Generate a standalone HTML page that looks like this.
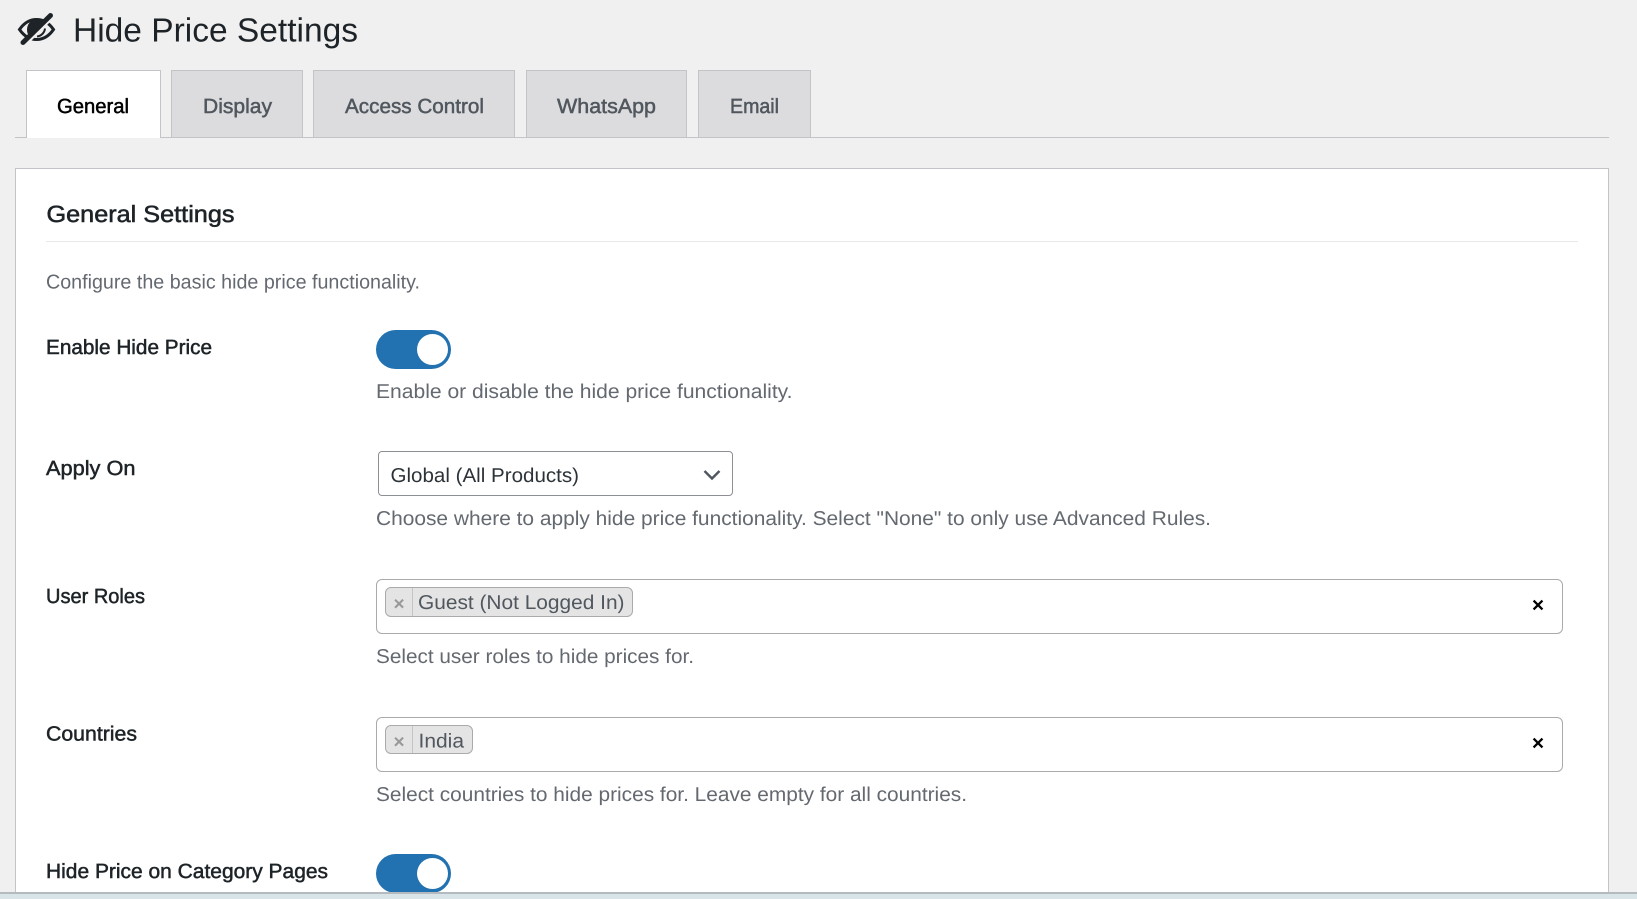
<!DOCTYPE html>
<html lang="en">
<head>
<meta charset="utf-8">
<title>Hide Price Settings</title>
<style>
html,body{margin:0;padding:0;width:1637px;height:899px;overflow:hidden;background:#f0f0f1}
.a{position:absolute;box-sizing:border-box}
.tab{top:70px;height:67px;background:#dcdcde;border:1px solid #c3c4c7;border-bottom:none}
.tag{background:#e4e4e4;border:1px solid #aaa;border-radius:6px}
.box{background:#fff;border:1px solid #aaa;border-radius:6px}
.tog{left:376px;width:75px;height:39px;background:#2271b1;border-radius:20px}
.tog i{position:absolute;left:41px;top:4px;width:31px;height:31px;border-radius:50%;background:#fff}
svg.t{position:absolute;left:0;top:0;width:1637px;height:899px}
text{font-family:"Liberation Sans",Arial,sans-serif;text-rendering:geometricPrecision}
.d{font-size:20px;fill:#646970}
.l{font-size:20.5px;fill:#1d2327;stroke:#1d2327;stroke-width:.5px}
.n{font-size:20.5px;fill:#50575e;stroke:#50575e;stroke-width:.5px}
</style>
</head>
<body>
<div class="a" style="left:15px;top:137px;width:1594px;height:1px;background:#c3c4c7"></div>
<div class="a tab" style="left:26px;width:135px;background:#fff;height:68px"></div>
<div class="a tab" style="left:171px;width:132px"></div>
<div class="a tab" style="left:313px;width:202px"></div>
<div class="a tab" style="left:526px;width:161px"></div>
<div class="a tab" style="left:698px;width:113px"></div>

<div class="a" style="left:15px;top:168px;width:1594px;height:726px;background:#fff;border:1px solid #c3c4c7;border-bottom:none"></div>
<div class="a" style="left:46px;top:241px;width:1532px;height:1px;background:#e8e8e9"></div>

<div class="a tog" style="top:330px"><i></i></div>
<div class="a" style="left:378px;top:451px;width:355px;height:45px;background:#fff;border:1px solid #8c8f94;border-radius:4px"></div>

<div class="a box" style="left:376px;top:579px;width:1187px;height:55px"></div>
<div class="a tag" style="left:385px;top:587px;width:248px;height:30px"></div>
<div class="a" style="left:412px;top:588px;width:1px;height:28px;background:#c4c4c4"></div>

<div class="a box" style="left:376px;top:717px;width:1187px;height:55px"></div>
<div class="a tag" style="left:385px;top:725px;width:88px;height:29px"></div>
<div class="a" style="left:412px;top:726px;width:1px;height:27px;background:#c4c4c4"></div>

<div class="a tog" style="top:854px"><i></i></div>

<svg class="t" viewBox="0 0 1637 899" xmlns="http://www.w3.org/2000/svg">
  <!-- eye-slash icon -->
  <path d="M19.5 29.5C24 23 30 19.5 36.5 19.5C43 19.5 49 23 53.5 29.5C49 36 43 39.5 36.5 39.5C30 39.5 24 36 19.5 29.5Z" fill="none" stroke="#1d2327" stroke-width="3"/>
  <path d="M27 30C27 23.5 31.5 19.5 37 19.5C40 19.5 43 20.5 45 22L30 37C28 35 27 32.5 27 30Z" fill="#1d2327"/>
  <path d="M27 43L52 18" stroke="#f0f0f1" stroke-width="3" fill="none"/>
  <path d="M23 42.5L50.5 15.5" stroke="#1d2327" stroke-width="5" stroke-linecap="round" fill="none"/>
  <path d="M37 36.5C41 36 44.5 33 45 28.5" stroke="#1d2327" stroke-width="2" fill="none"/>

  <text x="73" y="41.5" font-size="33.5" fill="#1d2327" textLength="285" lengthAdjust="spacingAndGlyphs">Hide Price Settings</text>

  <text x="57" y="113" class="l" style="fill:#000;stroke:#000" textLength="72" lengthAdjust="spacingAndGlyphs">General</text>
  <text x="203" y="113" class="n" textLength="69" lengthAdjust="spacingAndGlyphs">Display</text>
  <text x="345" y="113" class="n" textLength="139" lengthAdjust="spacingAndGlyphs">Access Control</text>
  <text x="557" y="113" class="n" textLength="99" lengthAdjust="spacingAndGlyphs">WhatsApp</text>
  <text x="730" y="113" class="n" textLength="49" lengthAdjust="spacingAndGlyphs">Email</text>

  <text x="46.5" y="222" font-size="23.5" fill="#1d2327" stroke="#1d2327" stroke-width=".55" textLength="188" lengthAdjust="spacingAndGlyphs">General Settings</text>
  <text x="46" y="288.5" class="d" textLength="374" lengthAdjust="spacingAndGlyphs">Configure the basic hide price functionality.</text>

  <text x="46" y="354" class="l" textLength="166" lengthAdjust="spacingAndGlyphs">Enable Hide Price</text>
  <text x="376" y="398" class="d" textLength="416.5" lengthAdjust="spacingAndGlyphs">Enable or disable the hide price functionality.</text>

  <text x="46" y="475" class="l" textLength="89.5" lengthAdjust="spacingAndGlyphs">Apply On</text>
  <text x="390.5" y="482" font-size="20" fill="#2c3338" textLength="188.5" lengthAdjust="spacingAndGlyphs">Global (All Products)</text>
  <path d="M704.5 471L712 478.5L719.5 471" fill="none" stroke="#50575e" stroke-width="2.4"/>
  <text x="376" y="525" class="d" textLength="835" lengthAdjust="spacingAndGlyphs">Choose where to apply hide price functionality. Select "None" to only use Advanced Rules.</text>

  <text x="46" y="603" class="l" textLength="99" lengthAdjust="spacingAndGlyphs">User Roles</text>
  <text x="399" y="610" font-size="19" font-weight="700" fill="#999" text-anchor="middle">×</text>
  <text x="418" y="609" font-size="20" fill="#50575e" textLength="206.5" lengthAdjust="spacingAndGlyphs">Guest (Not Logged In)</text>
  <text x="1538" y="612" font-size="21" font-weight="700" fill="#000" text-anchor="middle">×</text>
  <text x="376" y="663" class="d" textLength="318" lengthAdjust="spacingAndGlyphs">Select user roles to hide prices for.</text>

  <text x="46" y="740.5" class="l" textLength="91" lengthAdjust="spacingAndGlyphs">Countries</text>
  <text x="399" y="748" font-size="19" font-weight="700" fill="#999" text-anchor="middle">×</text>
  <text x="418.5" y="747.5" font-size="20" fill="#50575e" textLength="45.5" lengthAdjust="spacingAndGlyphs">India</text>
  <text x="1538" y="750" font-size="21" font-weight="700" fill="#000" text-anchor="middle">×</text>
  <text x="376" y="801" class="d" textLength="591" lengthAdjust="spacingAndGlyphs">Select countries to hide prices for. Leave empty for all countries.</text>

  <text x="46" y="878" class="l" textLength="282" lengthAdjust="spacingAndGlyphs">Hide Price on Category Pages</text>
</svg>

<div class="a" style="left:0;top:892px;width:1637px;height:2px;background:#b4babd"></div>
<div class="a" style="left:0;top:894px;width:1637px;height:5px;background:#d8e4e8"></div>
</body>
</html>
